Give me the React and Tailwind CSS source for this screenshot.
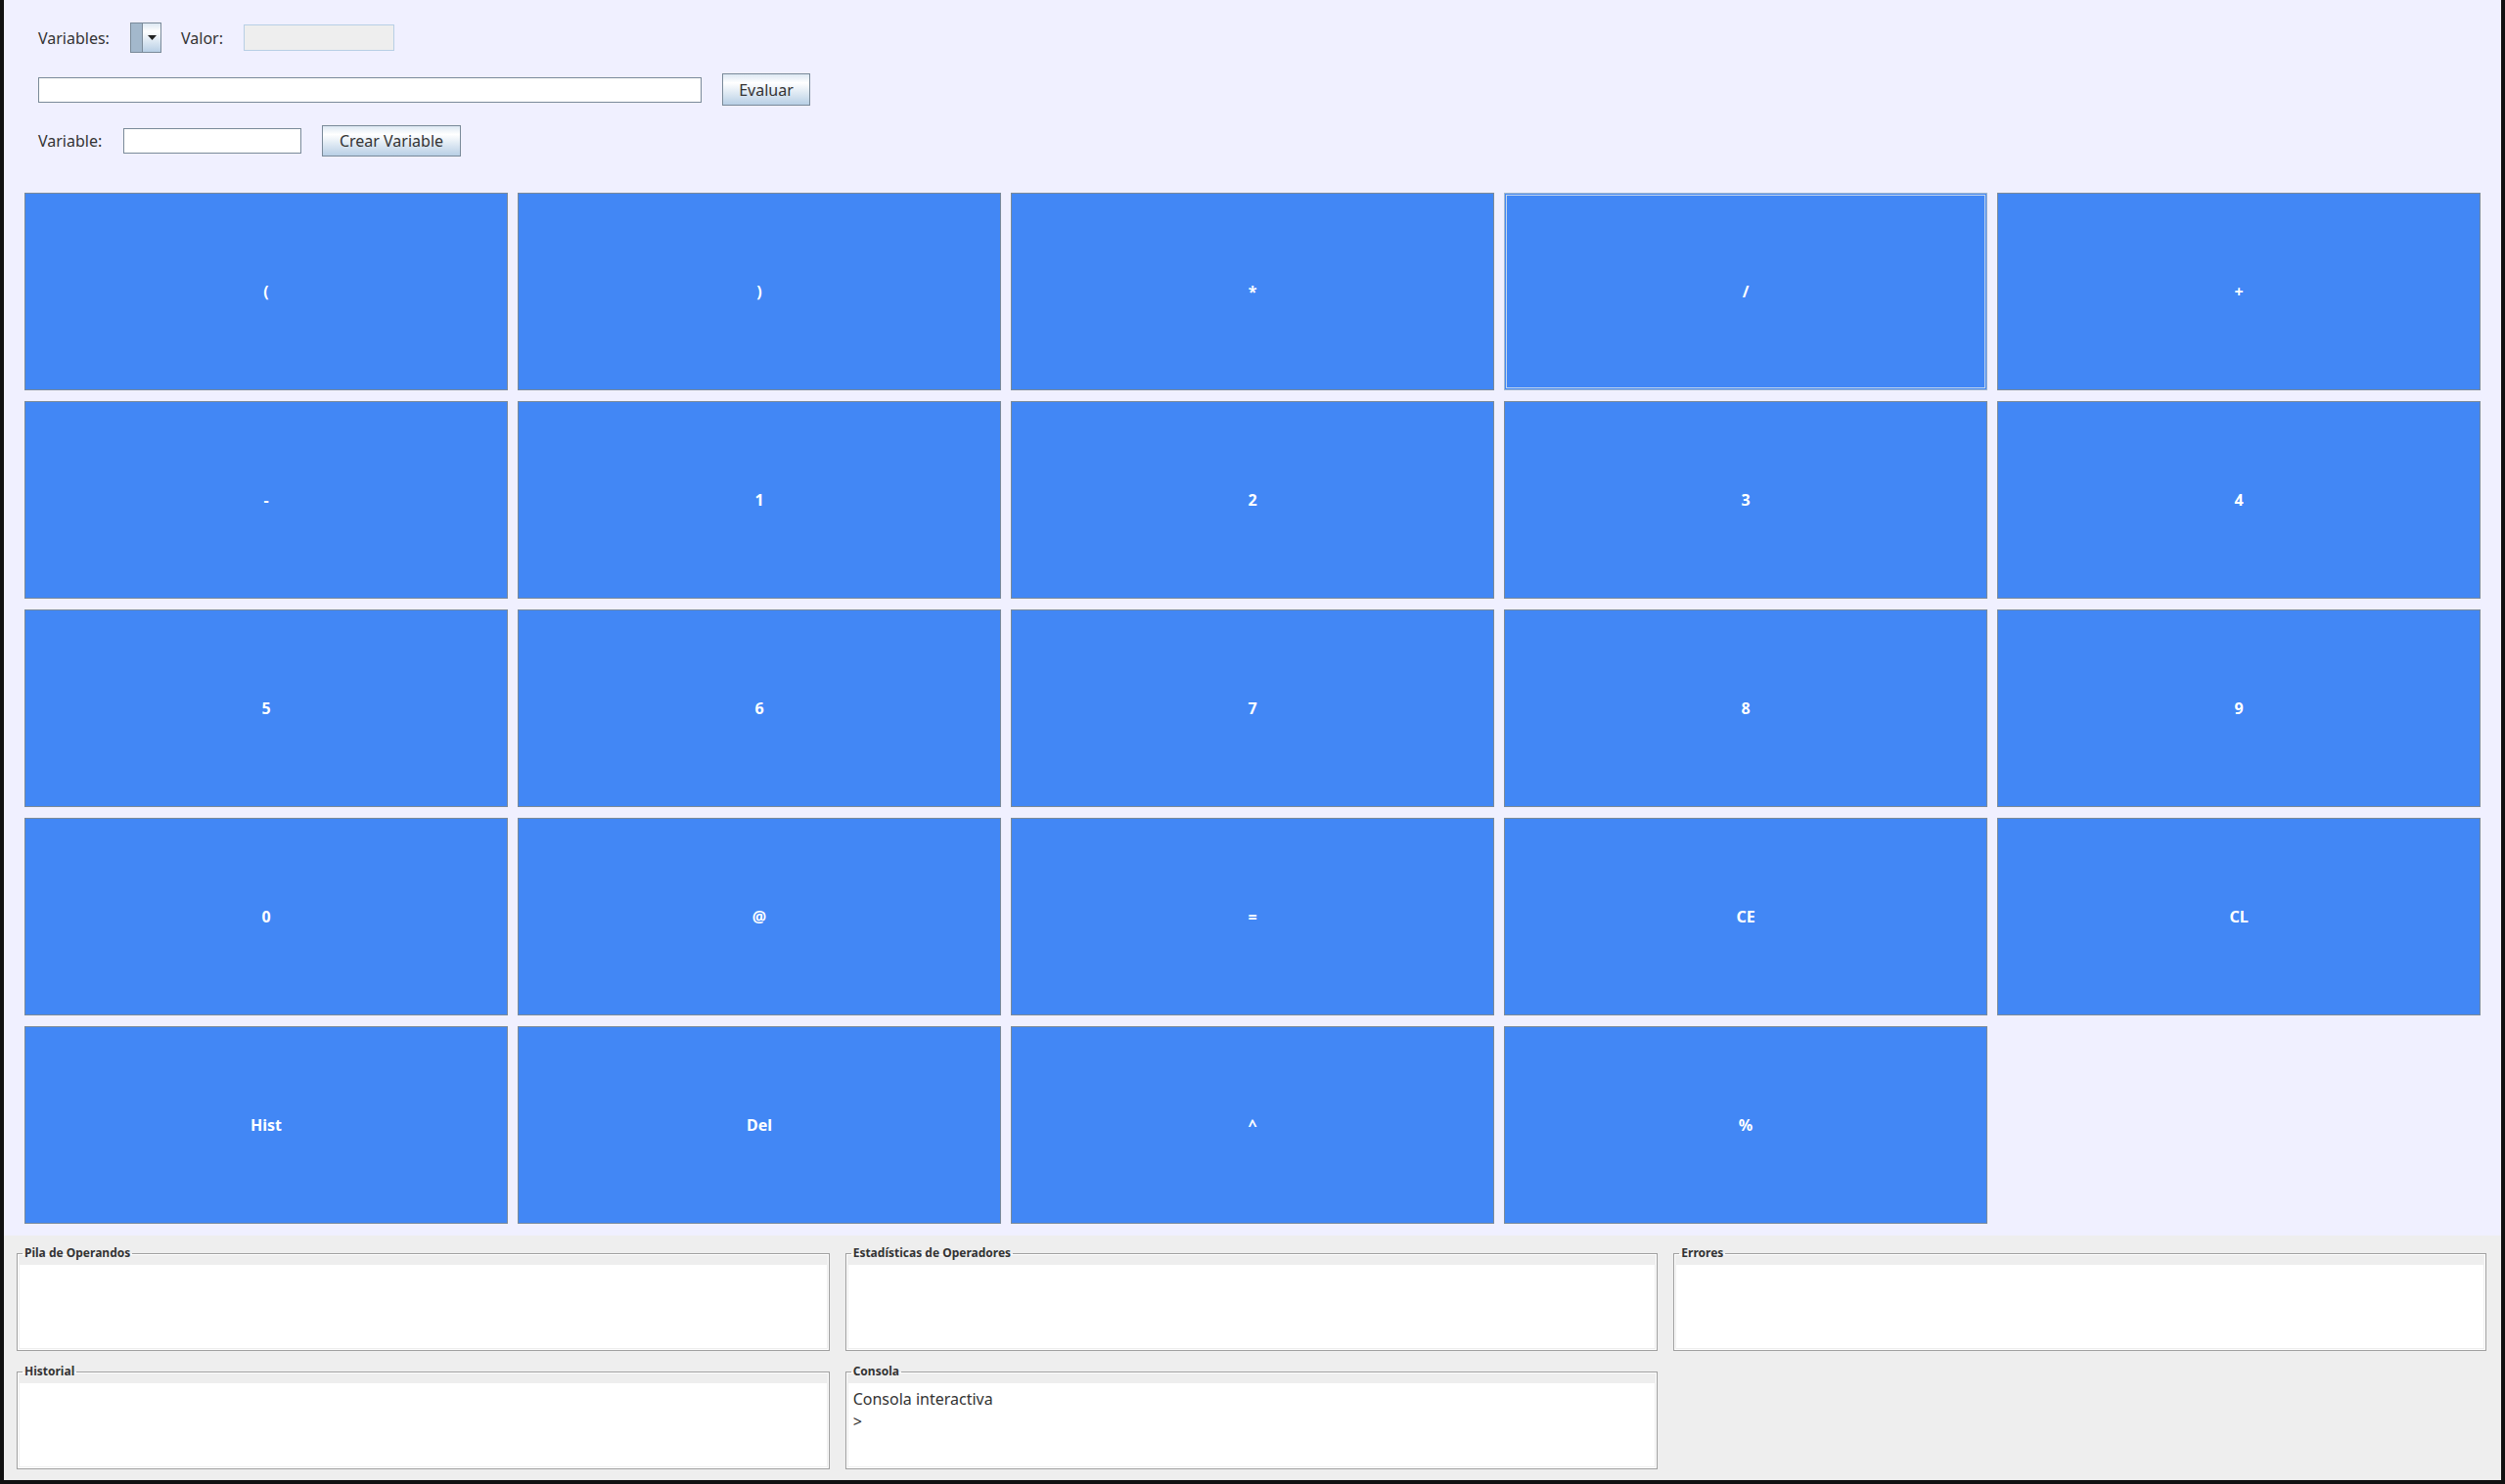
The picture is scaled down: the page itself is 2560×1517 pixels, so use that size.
import React from 'react';

const keys = [
    '(', ')', '*', '/', '+',
    '-', '1', '2', '3', '4',
    '5', '6', '7', '8', '9',
    '0', '@', '=', 'CE', 'CL',
    'Hist', 'Del', '^', '%',
];

const font = { fontFamily: '"Noto Sans", "Open Sans", sans-serif' };

function MetalButton({ children, className = '' }) {
    return (
        <button
            className={`flex shrink-0 items-center justify-center border border-[#7a8a99] bg-[linear-gradient(to_bottom,#dde8f3_0%,#ffffff_28%,#b8cfe5_100%)] text-[16px] text-[#333333] ${className}`}
        >
            {children}
        </button>
    );
}

function TextField({ className = '' }) {
    return <div className={`shrink-0 border border-[#7a8a99] bg-white ${className}`} />;
}

function Panel({ title, children }) {
    return (
        <fieldset className="flex h-[108px] min-w-0 flex-col border border-[#a0a0a0] px-[2px] pb-[2px] shadow-[inset_0_0_0_1px_#ffffff]">
            <legend className="ml-[3px] px-[2px] text-[12px] font-bold leading-[16px] text-[#333333]">{title}</legend>
            <div className="mt-[4px] flex-1 bg-white">{children}</div>
        </fieldset>
    );
}

export default function App() {
    return (
        <div className="flex h-[1517px] w-full flex-col bg-[#111111] px-[4px] pb-[4px]" style={font}>
            <div className="flex h-[1263px] shrink-0 flex-col bg-[#f0f0ff] pt-[23px]">
                <div className="flex h-[31px] items-center pl-[35px] text-[16px] text-[#333333]">
                    <span className="w-[94px] shrink-0">Variables:</span>
                    <div className="flex h-[31px] w-[32px] shrink-0 border border-[#7a8a99]">
                        <div className="w-[11px] bg-[#a3b8cc]" />
                        <div className="flex flex-1 items-center justify-center border-l border-[#7a8a99] bg-[linear-gradient(to_bottom,#dde8f3_0%,#ffffff_28%,#b8cfe5_100%)]">
                            <svg width="9" height="5" viewBox="0 0 9 5">
                                <path d="M0 0 H9 L4.5 5 Z" fill="#222222" />
                            </svg>
                        </div>
                    </div>
                    <span className="ml-[20px] w-[64px] shrink-0">Valor:</span>
                    <div className="h-[27px] w-[154px] shrink-0 border border-[#b8cfe5] bg-[#eeeeee]" />
                </div>

                <div className="mt-[21px] flex h-[33px] items-center pl-[35px]">
                    <TextField className="h-[26px] w-[678px]" />
                    <MetalButton className="ml-[21px] h-[33px] w-[90px]">Evaluar</MetalButton>
                </div>

                <div className="mt-[20px] flex h-[32px] items-center pl-[35px] text-[16px] text-[#333333]">
                    <span className="w-[87px] shrink-0">Variable:</span>
                    <TextField className="h-[26px] w-[182px]" />
                    <MetalButton className="ml-[21px] h-[32px] w-[142px]">Crear Variable</MetalButton>
                </div>

                <div className="mt-[37px] grid auto-rows-[202px] grid-cols-5 gap-x-[10px] gap-y-[11px] px-[21px]">
                    {keys.map((k) => (
                        <button
                            key={k}
                            className={
                                k === '/'
                                    ? 'flex items-center justify-center border border-[#a3b8cc] bg-[#4287f5] text-[16px] font-bold text-white shadow-[inset_0_0_0_1px_#4287f5,inset_0_0_0_2px_#c5d7eb]'
                                    : 'flex items-center justify-center border border-[#7a8a99] bg-[#4287f5] text-[16px] font-bold text-white'
                            }
                        >
                            {k}
                        </button>
                    ))}
                </div>
            </div>

            <div className="grid flex-1 grid-cols-3 content-start gap-x-[16px] gap-y-[13px] bg-[#eeeeee] pl-[13px] pr-[15px] pt-[10px]">
                <Panel title="Pila de Operandos" />
                <Panel title="Estadísticas de Operadores" />
                <Panel title="Errores" />
                <Panel title="Historial" />
                <Panel title="Consola">
                    <div className="pl-[5px] pt-[5px] text-[16px] leading-[23px] text-[#333333]">
                        <div>Consola interactiva</div>
                        <div>&gt;</div>
                    </div>
                </Panel>
            </div>
        </div>
    );
}
